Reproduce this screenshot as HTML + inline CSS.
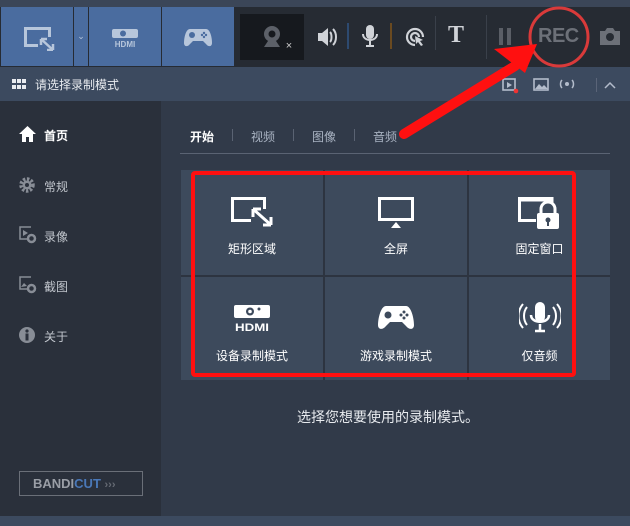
<!DOCTYPE html>
<html><head><meta charset="utf-8"><style>
*{margin:0;padding:0;box-sizing:border-box}
body{width:630px;height:526px;overflow:hidden;background:#313a49;font-family:"Liberation Sans","Noto Sans CJK SC",sans-serif;position:relative}
.a{position:absolute}
.cell{position:absolute;background:#3d4a5c;color:#fff;font-size:12px;text-align:center}
.cell span{position:absolute;left:0;right:0;top:70px}
.cell svg{position:absolute;left:50%;transform:translateX(-50%);top:27px}
.side{color:#c0c5cc;font-size:12px}
</style></head><body>
<div class="a" style="left:0;top:0;width:630px;height:7px;background:#3b4658"></div>
<div class="a" style="left:0;top:7px;width:630px;height:60px;background:#262b33"></div>
<div class="a" style="left:1px;top:7px;width:72px;height:59px;background:#4a6c9f"></div>
<div class="a" style="left:74px;top:7px;width:14px;height:59px;background:#4a6c9f;color:#b7c6db;font-size:9px;text-align:center;line-height:59px">⌄</div>
<div class="a" style="left:89px;top:7px;width:72px;height:59px;background:#4a6c9f"></div>
<div class="a" style="left:162px;top:7px;width:72px;height:59px;background:#4a6c9f"></div>
<svg class="a" style="left:24px;top:27px" width="32" height="24"><rect x="1.5" y="1.5" width="24" height="17" fill="none" stroke="#b7c6db" stroke-width="3"/><rect x="14" y="10" width="18" height="14" fill="#4a6c9f"/><path d="M17 12 L29 23 M17 12h6M17 12v6M29 23h-6M29 23v-6" stroke="#b7c6db" stroke-width="2.5" fill="none"/></svg>
<svg class="a" style="left:110px;top:28px" width="30" height="20"><rect x="2" y="1" width="26" height="9" rx="2" fill="#b7c6db"/><circle cx="13" cy="5.5" r="3" fill="#4a6c9f"/><text x="15" y="19" font-size="8" font-weight="bold" fill="#b7c6db" text-anchor="middle" font-family="Liberation Sans">HDMI</text></svg>
<svg class="a" style="left:184px;top:27px" width="28" height="20"><path d="M6 2h16c4 0 6 8 6 14 0 4-4 4-6 1l-3-3H9l-3 3c-2 3-6 3-6-1 0-6 2-14 6-14z" fill="#b7c6db"/><circle cx="8" cy="8" r="3" fill="#4a6c9f"/><circle cx="20" cy="6" r="1.2" fill="#4a6c9f"/><circle cx="20" cy="10" r="1.2" fill="#4a6c9f"/><circle cx="18" cy="8" r="1.2" fill="#4a6c9f"/><circle cx="22" cy="8" r="1.2" fill="#4a6c9f"/></svg>
<div class="a" style="left:240px;top:14px;width:64px;height:46px;background:#16191e"></div>
<svg class="a" style="left:260px;top:24px" width="36" height="26"><circle cx="12" cy="10" r="8" fill="#5c6068"/><circle cx="12" cy="10" r="3.5" fill="#16191e"/><path d="M4 23 L8 17 H16 L20 23Z" fill="#5c6068"/><text x="29" y="25" font-size="11" fill="#ccc" text-anchor="middle">×</text></svg>
<svg class="a" style="left:316px;top:26px" width="22" height="26"><path d="M2 7h4l6-5v18l-6-5H2z" fill="#d0d3d8"/><path d="M14 6c2 2 2 8 0 10M17 3c4 4 4 12 0 16" stroke="#d0d3d8" stroke-width="2" fill="none"/></svg>
<div class="a" style="left:347px;top:23px;width:2px;height:26px;background:#2d4a70"></div>
<svg class="a" style="left:360px;top:25px" width="20" height="24"><rect x="6" y="0" width="8" height="14" rx="4" fill="#d0d3d8"/><path d="M3 9c0 8 14 8 14 0M10 16v5M6 21h8" stroke="#d0d3d8" stroke-width="2" fill="none"/></svg>
<div class="a" style="left:390px;top:23px;width:2px;height:26px;background:#6a4a20"></div>
<svg class="a" style="left:405px;top:27px" width="20" height="20"><path d="M10 18a8 8 0 1 1 8-8M10 14a4 4 0 1 1 4-4" stroke="#d0d3d8" stroke-width="2.2" fill="none"/><path d="M10 9l8 4-3 1 3 4-2 1-3-4-2 2z" fill="#d0d3d8"/></svg>
<div class="a" style="left:435px;top:16px;width:1px;height:34px;background:#3a404a"></div>
<div class="a" style="left:448px;top:22px;color:#d0d3d8;font-family:'Liberation Serif',serif;font-weight:bold;font-size:24px">T</div>
<div class="a" style="left:486px;top:15px;width:1px;height:44px;background:#3a404a"></div>
<div class="a" style="left:499px;top:28px;width:4px;height:17px;background:#5a5e66"></div>
<div class="a" style="left:507px;top:28px;width:4px;height:17px;background:#5a5e66"></div>
<div class="a" style="left:538px;top:25px;color:#6c7078;font-family:'Liberation Sans',sans-serif;font-weight:bold;font-size:20px;letter-spacing:-0.5px">REC</div>
<svg class="a" style="left:599px;top:27px" width="22" height="18"><path d="M1 4h5l2-3h6l2 3h5v14H1z" fill="#6c7078"/><circle cx="11" cy="10" r="4" fill="#262b33"/></svg>
<div class="a" style="left:0;top:67px;width:630px;height:34px;background:#3c4a5f"></div>
<svg class="a" style="left:12px;top:79px" width="14" height="10"><g fill="#e8ebef"><rect x="0" y="0" width="4" height="4"/><rect x="5" y="0" width="4" height="4"/><rect x="10" y="0" width="4" height="4"/><rect x="0" y="6" width="4" height="4"/><rect x="5" y="6" width="4" height="4"/><rect x="10" y="6" width="4" height="4"/></g></svg>
<div class="a" style="left:35px;top:76px;color:#e8ebef;font-size:12px">请选择录制模式</div>
<svg class="a" style="left:502px;top:78px" width="120" height="16"><rect x="1" y="1" width="12" height="11" fill="none" stroke="#b3bccb" stroke-width="1.6"/><path d="M5 4l5 3-5 3z" fill="#b3bccb"/><circle cx="14" cy="13" r="2.3" fill="#e33"/><rect x="32" y="1" width="14" height="11" fill="none" stroke="#b3bccb" stroke-width="1.6"/><path d="M33 11l4-5 3 3 2-2 4 4z" fill="#b3bccb"/><circle cx="65" cy="6" r="2" fill="#b3bccb"/><path d="M60 2c-2 2-2 6 0 8M70 2c2 2 2 6 0 8" stroke="#b3bccb" stroke-width="1.5" fill="none"/><rect x="94" y="0" width="1" height="14" fill="#5a6478"/><path d="M103 10l5-5 5 5" stroke="#b3bccb" stroke-width="1.5" fill="none"/></svg>
<div class="a" style="left:0;top:101px;width:161px;height:415px;background:#2a303b"></div>
<svg class="a" style="left:19px;top:126px" width="17" height="16"><path d="M8.5 0L17 8h-3v8h-4v-5H7v5H3V8H0z" fill="#fff"/></svg>
<div class="a" style="left:44px;top:127px;color:#fff;font-size:12px;font-weight:bold">首页</div>
<svg class="a" style="left:19px;top:177px" width="16" height="16"><circle cx="8" cy="8" r="6" fill="none" stroke="#888d96" stroke-width="3.5" stroke-dasharray="2.4 1.6"/><circle cx="8" cy="8" r="4.5" fill="#888d96"/><circle cx="8" cy="8" r="2" fill="#2a303b"/></svg>
<div class="a side" style="left:44px;top:178px">常规</div>
<svg class="a" style="left:19px;top:226px" width="18" height="18"><path d="M12 1H1v12h7" stroke="#888d96" stroke-width="1.5" fill="none"/><path d="M4 4l5 3-5 3z" fill="#888d96"/><circle cx="12.5" cy="12.5" r="3.5" fill="none" stroke="#888d96" stroke-width="2.5"/></svg>
<div class="a side" style="left:44px;top:228px">录像</div>
<svg class="a" style="left:19px;top:276px" width="18" height="18"><path d="M12 1H1v12h7" stroke="#888d96" stroke-width="1.5" fill="none"/><path d="M2 11l3-4 3 3" fill="#888d96"/><circle cx="12.5" cy="12.5" r="3.5" fill="none" stroke="#888d96" stroke-width="2.5"/></svg>
<div class="a side" style="left:44px;top:278px">截图</div>
<svg class="a" style="left:19px;top:327px" width="16" height="16"><circle cx="8" cy="8" r="8" fill="#888d96"/><rect x="6.5" y="6.5" width="3" height="7" fill="#2a303b"/><circle cx="8" cy="4" r="1.6" fill="#2a303b"/></svg>
<div class="a side" style="left:44px;top:328px">关于</div>
<div class="a" style="left:19px;top:471px;width:124px;height:25px;border:1px solid #6a6f78;font-family:'Liberation Sans',sans-serif;font-weight:bold;font-size:13px;line-height:23px;padding-left:13px;color:#9a9ea6">BANDI<span style="color:#4a78b8">CUT</span> <span style="color:#666b74;font-size:11px">›››</span></div>
<div class="a" style="left:190px;top:128px;color:#fff;font-size:12px;font-weight:bold">开始</div>
<div class="a" style="left:232px;top:129px;width:1px;height:12px;background:#5a6373"></div>
<div class="a" style="left:251px;top:128px;color:#a9b3c2;font-size:12px">视频</div>
<div class="a" style="left:293px;top:129px;width:1px;height:12px;background:#5a6373"></div>
<div class="a" style="left:312px;top:128px;color:#a9b3c2;font-size:12px">图像</div>
<div class="a" style="left:354px;top:129px;width:1px;height:12px;background:#5a6373"></div>
<div class="a" style="left:373px;top:128px;color:#a9b3c2;font-size:12px">音频</div>
<div class="a" style="left:180px;top:153px;width:430px;height:1px;background:#5a6373"></div>
<div class="a" style="left:181px;top:170px;width:429px;height:210px;background:#2d3440"></div>
<div class="cell" style="left:181px;top:170px;width:142px;height:105px"><svg width="42" height="30"><rect x="1.5" y="1.5" width="32" height="22" fill="none" stroke="#fff" stroke-width="3"/><rect x="20" y="12" width="22" height="18" fill="#3d4a5c"/><path d="M22 12L40 28M22 12h8M22 12v8M40 28h-8M40 28v-8" stroke="#fff" stroke-width="3" fill="none"/></svg><span>矩形区域</span></div>
<div class="cell" style="left:325px;top:170px;width:142px;height:105px"><svg width="36" height="32"><rect x="1.5" y="1.5" width="33" height="21" fill="none" stroke="#fff" stroke-width="3"/><path d="M13 31L18 25 23 31z" fill="#fff"/></svg><span>全屏</span></div>
<div class="cell" style="left:469px;top:170px;width:141px;height:105px"><svg width="44" height="34"><path d="M34 7V1.5H1.5v22H18" fill="none" stroke="#fff" stroke-width="3"/><rect x="1.5" y="1.5" width="33" height="3" fill="#fff"/><rect x="19" y="16" width="22" height="16" rx="2" fill="#fff"/><path d="M23 16v-4a7 7 0 0 1 14 0v4" stroke="#fff" stroke-width="3" fill="none"/><circle cx="30" cy="23" r="2.5" fill="#3d4a5c"/><rect x="29" y="24" width="2" height="5" fill="#3d4a5c"/></svg><span>固定窗口</span></div>
<div class="cell" style="left:181px;top:277px;width:142px;height:103px"><svg width="38" height="28" style="top:27px"><rect x="1" y="1" width="36" height="13" rx="2" fill="#fff"/><circle cx="17" cy="7.5" r="4" fill="#3d4a5c"/><circle cx="17" cy="7.5" r="1.8" fill="#fff"/><circle cx="26" cy="5" r="1.5" fill="#3d4a5c"/><text x="19" y="27" font-size="11" font-weight="bold" fill="#fff" text-anchor="middle" font-family="Liberation Sans" textLength="34" lengthAdjust="spacingAndGlyphs">HDMI</text></svg><span style="top:70px">设备录制模式</span></div>
<div class="cell" style="left:325px;top:277px;width:142px;height:103px"><svg width="36" height="26" style="top:28px"><path d="M8 1h20c5 0 8 12 8 19 0 5-5 5-8 1l-4-4H12l-4 4c-3 4-8 4-8-1 0-7 3-19 8-19z" fill="#fff"/><circle cx="10" cy="10" r="3.5" fill="#3d4a5c"/><circle cx="26" cy="7" r="1.5" fill="#3d4a5c"/><circle cx="26" cy="13" r="1.5" fill="#3d4a5c"/><circle cx="23" cy="10" r="1.5" fill="#3d4a5c"/><circle cx="29" cy="10" r="1.5" fill="#3d4a5c"/></svg><span style="top:70px">游戏录制模式</span></div>
<div class="cell" style="left:469px;top:277px;width:141px;height:103px"><svg width="42" height="34" style="top:24px"><rect x="16" y="1" width="10" height="20" rx="5" fill="#fff"/><path d="M12 14c0 9 18 9 18 0M21 23v6M16 30h10" stroke="#fff" stroke-width="2.5" fill="none"/><path d="M8 6c-4 5-4 13 0 18M4 3c-6 7-6 17 0 24M34 6c4 5 4 13 0 18M38 3c6 7 6 17 0 24" stroke="#fff" stroke-width="2" fill="none"/></svg><span style="top:70px">仅音频</span></div>
<div class="a" style="left:191px;top:171px;width:385px;height:206px;border:4px solid #ff1010;border-radius:4px"></div>
<div class="a" style="left:297px;top:407px;color:#e8ebef;font-size:14px">选择您想要使用的录制模式。</div>
<div class="a" style="left:0;top:516px;width:630px;height:10px;background:#3c4a5f"></div>
<svg class="a" style="left:0;top:0" width="630" height="526"><circle cx="559" cy="37" r="29" fill="none" stroke="#d93a3a" stroke-width="3"/><line x1="404" y1="134" x2="515" y2="66" stroke="#ff1010" stroke-width="10" stroke-linecap="round"/><path d="M537 44L494 49 525 73z" fill="#ff1010"/></svg>
</body></html>
